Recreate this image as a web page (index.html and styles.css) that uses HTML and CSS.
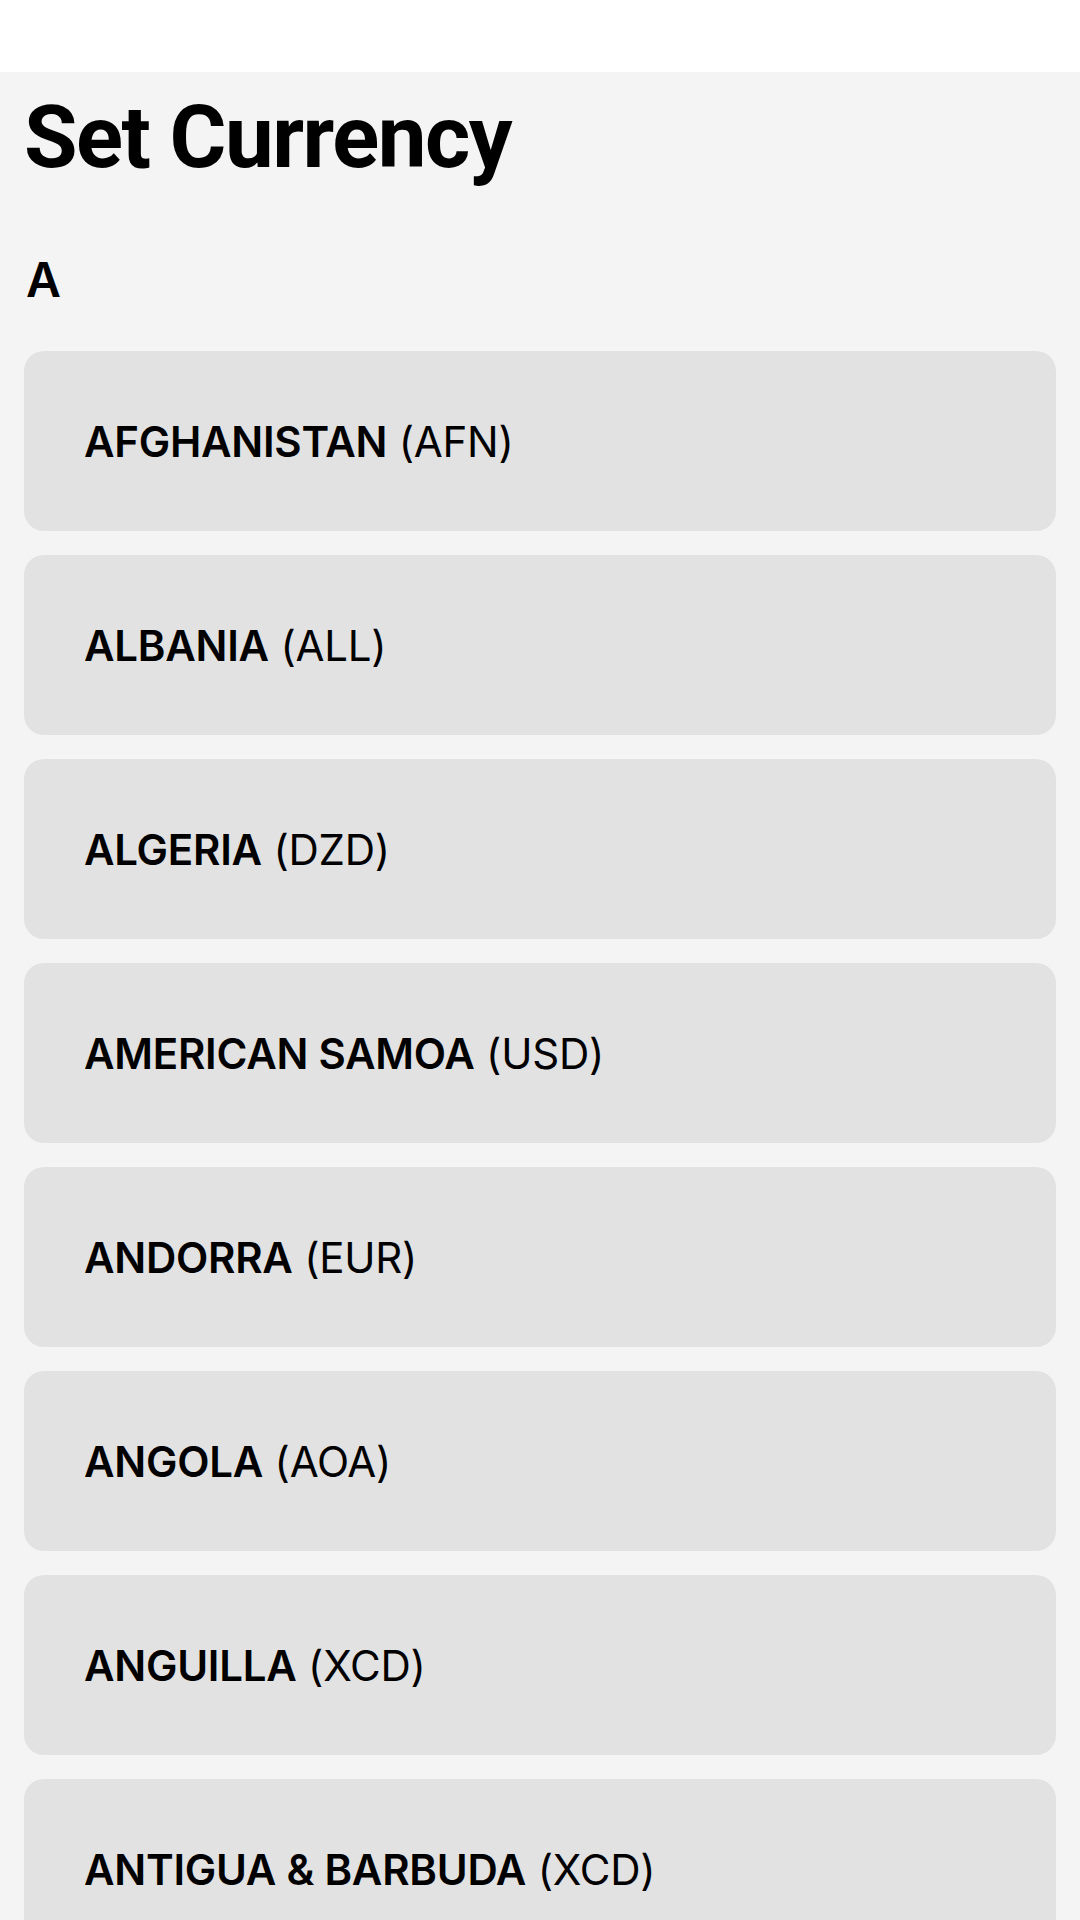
FILE: index.html
```html
<!DOCTYPE html>
<html lang="en">
<head>
<meta charset="utf-8">
<title>Set Currency</title>
<link rel="stylesheet" href="styles.css">
</head>
<body>
<div class="topbar"></div>
<main class="content">
  <h1 class="title">Set Currency</h1>
  <h2 class="letter">A</h2>
  <ul class="list">
    <li class="item"><span class="label"><b class="country">AFGHANISTAN</b> <span class="code">(AFN)</span></span></li>
    <li class="item"><span class="label"><b class="country">ALBANIA</b> <span class="code">(ALL)</span></span></li>
    <li class="item"><span class="label"><b class="country">ALGERIA</b> <span class="code">(DZD)</span></span></li>
    <li class="item"><span class="label"><b class="country">AMERICAN SAMOA</b> <span class="code">(USD)</span></span></li>
    <li class="item"><span class="label"><b class="country">ANDORRA</b> <span class="code">(EUR)</span></span></li>
    <li class="item"><span class="label"><b class="country">ANGOLA</b> <span class="code">(AOA)</span></span></li>
    <li class="item"><span class="label"><b class="country">ANGUILLA</b> <span class="code">(XCD)</span></span></li>
    <li class="item"><span class="label"><b class="country">ANTIGUA &amp; BARBUDA</b> <span class="code">(XCD)</span></span></li>
  </ul>
</main>
</body>
</html>
```
FILE: styles.css
```css
html, body {
  margin: 0;
  padding: 0;
}
body {
  background: #f4f4f4;
  color: #000;
  font-family: Inter, "Noto Sans", sans-serif;
  height: 1920px;
  overflow: hidden;
}
.topbar {
  height: 72px;
  background: #ffffff;
}
.content {
  padding: 0 24px;
}
.title {
  margin: 22px 0 0 0;
  font-family: Roboto, "Liberation Sans", sans-serif;
  font-weight: 700;
  font-size: 87px;
  line-height: 87px;
  letter-spacing: -1.5px;
}
.letter {
  margin: 75px 0 0 2px;
  font-family: Inter, sans-serif;
  font-weight: 600;
  font-size: 48px;
  line-height: 48px;
}
.list {
  list-style: none;
  margin: 47px 0 0 0;
  padding: 0;
  display: flex;
  flex-direction: column;
  gap: 24px;
}
.item {
  height: 180px;
  box-sizing: border-box;
  background: #e2e2e2;
  border-radius: 20px;
  display: flex;
  align-items: center;
  padding-left: 60px;
  font-size: 42px;
  letter-spacing: -0.25px;
}
.label {
  white-space: nowrap;
}
.country {
  font-weight: 600;
}
.code {
  font-weight: 400;
}
```
